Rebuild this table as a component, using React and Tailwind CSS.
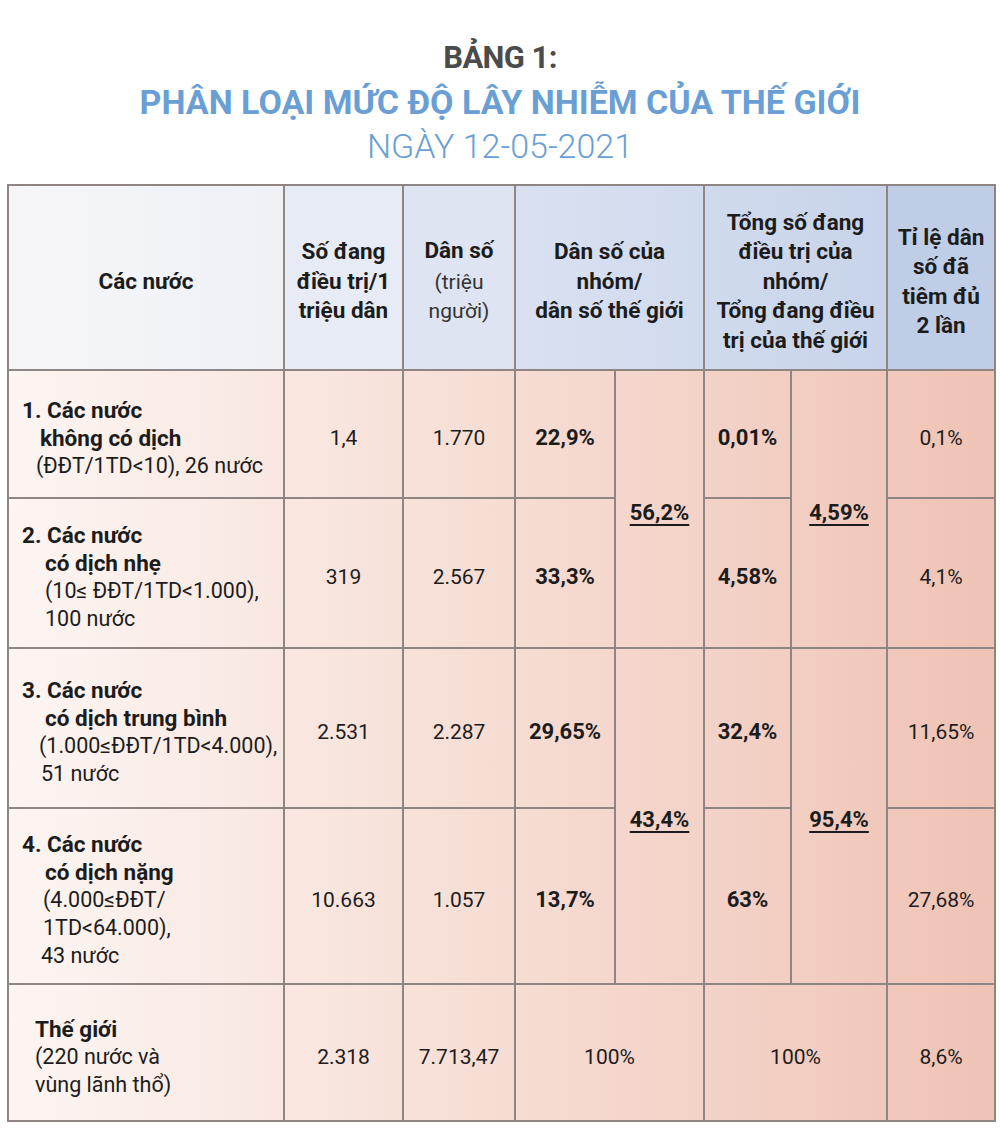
import React from 'react';

const rows = [
    {
        label: [
            { t: '1. Các nước', b: true, pl: 'pl-0' },
            { t: 'không có dịch', b: true, pl: 'pl-[18px]' },
            { t: '(ĐĐT/1TD<10), 26 nước', b: false, pl: 'pl-[14px]' },
        ],
        h: 'h-[128px]',
        perM: '1,4',
        pop: '1.770',
        popShare: '22,9%',
        treatShare: '0,01%',
        vacc: '0,1%',
    },
    {
        label: [
            { t: '2. Các nước', b: true, pl: 'pl-0' },
            { t: 'có dịch nhẹ', b: true, pl: 'pl-[23px]' },
            { t: '(10≤ ĐĐT/1TD<1.000),', b: false, pl: 'pl-[23px]' },
            { t: '100 nước', b: false, pl: 'pl-[23px]' },
        ],
        h: 'h-[150px]',
        perM: '319',
        pop: '2.567',
        popShare: '33,3%',
        treatShare: '4,58%',
        vacc: '4,1%',
    },
    {
        label: [
            { t: '3. Các nước', b: true, pl: 'pl-0' },
            { t: 'có dịch trung bình', b: true, pl: 'pl-[23px]' },
            { t: '(1.000≤ĐĐT/1TD<4.000),', b: false, pl: 'pl-[17px]' },
            { t: '51 nước', b: false, pl: 'pl-[19px]' },
        ],
        h: 'h-[160px]',
        perM: '2.531',
        pop: '2.287',
        popShare: '29,65%',
        treatShare: '32,4%',
        vacc: '11,65%',
    },
    {
        label: [
            { t: '4. Các nước', b: true, pl: 'pl-0' },
            { t: 'có dịch nặng', b: true, pl: 'pl-[23px]' },
            { t: '(4.000≤ĐĐT/', b: false, pl: 'pl-[21px]' },
            { t: '1TD<64.000),', b: false, pl: 'pl-[21px]' },
            { t: '43 nước', b: false, pl: 'pl-[19px]' },
        ],
        h: 'h-[176px]',
        perM: '10.663',
        pop: '1.057',
        popShare: '13,7%',
        treatShare: '63%',
        vacc: '27,68%',
    },
];

const cell = 'border-2 border-[#8f8683] text-center align-middle pt-[8px]';

const App = () => {
    return (
        <div className="w-[1000px] h-[1138px] bg-white font-['Roboto',sans-serif] text-[#1c1c1c]">
            {/* Title */}
            <div className="pt-[36px] pb-[16px] text-center leading-[44px]">
                <div className="text-[31px] font-bold text-[#4b4b4b] tracking-[-0.02em]">BẢNG 1:</div>
                <div className="text-[34px] font-bold text-[#6a9fd5]">
                    PHÂN LOẠI MỨC ĐỘ LÂY NHIỄM CỦA THẾ GIỚI
                </div>
                <div className="text-[34px] font-light text-[#6a9fd5]">NGÀY 12-05-2021</div>
            </div>

            {/* Table */}
            <div className="ml-[7px] w-[987px] bg-linear-to-r from-[#fcf5f2] via-[#f6ddd4] to-[#efc3b5]">
                <table className="table-fixed border-collapse w-full text-[21px] leading-[28px]">
                    <colgroup>
                        <col className="w-[276px]" />
                        <col className="w-[119px]" />
                        <col className="w-[112px]" />
                        <col className="w-[100px]" />
                        <col className="w-[89px]" />
                        <col className="w-[87px]" />
                        <col className="w-[96px]" />
                        <col className="w-[108px]" />
                    </colgroup>
                    <thead>
                        <tr className="h-[185px] font-bold text-[22.5px] leading-[29.5px]">
                            <th className={`${cell} bg-linear-to-r from-[#f6f6f9] to-[#eff1f7]`}>Các nước</th>
                            <th className={`${cell} bg-[#e7ebf5] px-0`}>
                                Số đang<br />điều trị/1<br />triệu dân
                            </th>
                            <th className={`${cell} bg-[#dee4f2]`}>
                                Dân số
                                <div className="font-normal text-[21px] text-[#333] mt-[2px]">(triệu<br />người)</div>
                            </th>
                            <th colSpan={2} className={`${cell} bg-linear-to-r from-[#d9e1f1] to-[#d1dbee]`}>
                                Dân số của<br />nhóm/<br />dân số thế giới
                            </th>
                            <th colSpan={2} className={`${cell} bg-linear-to-r from-[#d0daed] to-[#c8d4ea]`}>
                                Tổng số đang<br />điều trị của<br />nhóm/<br />Tổng đang điều<br />trị của thế giới
                            </th>
                            <th className={`${cell} bg-[#bfcde6]`}>
                                Tỉ lệ dân<br />số đã<br />tiêm đủ<br />2 lần
                            </th>
                        </tr>
                    </thead>
                    <tbody>
                        {rows.map((row, i) => (
                            <tr key={i} className={row.h}>
                                <td className={`${cell} text-left pl-[13px] pr-0`}>
                                    {row.label.map((line, j) => (
                                        <div
                                            key={j}
                                            className={`${line.pl} ${line.b ? 'font-bold text-[22.5px]' : 'font-normal text-[21.5px]'} whitespace-nowrap`}
                                        >
                                            {line.t}
                                        </div>
                                    ))}
                                </td>
                                <td className={cell}>{row.perM}</td>
                                <td className={cell}>{row.pop}</td>
                                <td className={`${cell} font-bold text-[22px]`}>{row.popShare}</td>
                                {i % 2 === 0 && (
                                    <td rowSpan={2} className={`${cell} font-bold text-[22px]`}>
                                        <span className="underline underline-offset-[4px] decoration-2">
                                            {i === 0 ? '56,2%' : '43,4%'}
                                        </span>
                                    </td>
                                )}
                                <td className={`${cell} font-bold text-[22px]`}>{row.treatShare}</td>
                                {i % 2 === 0 && (
                                    <td rowSpan={2} className={`${cell} font-bold text-[22px]`}>
                                        <span className="underline underline-offset-[4px] decoration-2">
                                            {i === 0 ? '4,59%' : '95,4%'}
                                        </span>
                                    </td>
                                )}
                                <td className={cell}>{row.vacc}</td>
                            </tr>
                        ))}
                        <tr className="h-[137px]">
                            <td className={`${cell} text-left pl-[26px] text-[21.5px]`}>
                                <div className="font-bold text-[22.5px]">Thế giới</div>
                                <div>(220 nước và</div>
                                <div>vùng lãnh thổ)</div>
                            </td>
                            <td className={cell}>2.318</td>
                            <td className={cell}>7.713,47</td>
                            <td colSpan={2} className={cell}>100%</td>
                            <td colSpan={2} className={cell}>100%</td>
                            <td className={cell}>8,6%</td>
                        </tr>
                    </tbody>
                </table>
            </div>
        </div>
    );
};

export default App;
